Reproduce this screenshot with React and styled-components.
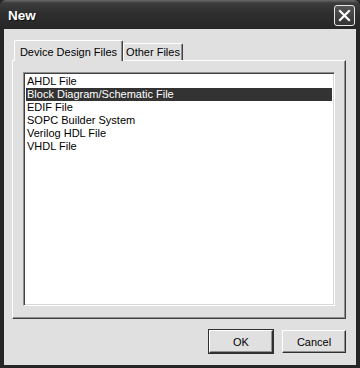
import styled, { createGlobalStyle } from "styled-components";

const Global = createGlobalStyle`
  body { margin: 0; background: #202020; }
`

const Window = styled.div`width: 360px; height: 368px; box-sizing: border-box; display: flex; flex-direction: column; background: #262626; padding: 0 4px 3px 4px; font-family: "Liberation Sans", Arial, sans-serif; font-size: 11px; color: #000;`
const TitleBar = styled.div`height: 29px; margin: 0 -4px; padding: 0 5px 0 8px; display: flex; align-items: center; justify-content: space-between; background: linear-gradient(#6a6a6a 0px, #3c3c3c 3px, #2e2e2e 14px, #262626 29px); border-radius: 6px 6px 0 0;`
const TitleText = styled.span`color: #fff; font-family: "Liberation Sans", Arial, sans-serif; font-weight: bold; font-size: 13.5px; text-shadow: 1px 1px 0 #111; margin-top: 1px;`
const CloseBtn = styled.div`width: 19px; height: 19px; border: 1px solid #e8e8e8; border-radius: 3px; display: flex; align-items: center; justify-content: center; background: linear-gradient(#555, #333); margin-top: 1px;`
const Body = styled.div`flex: 1; background: #e0e0e0; display: flex; flex-direction: column; padding: 11px 10px 12px 8px;`
const TabRow = styled.div`display: flex; align-items: flex-end; padding-left: 2px; height: 20px; position: relative; z-index: 1;`
const Tab = styled.div`box-sizing: border-box; display: flex; align-items: center; justify-content: center; background: #e0e0e0; border-top: 1px solid #fff; border-left: 1px solid #fff; border-right: 1px solid #404040; box-shadow: inset -1px 0 0 #909090; border-radius: 2px 2px 0 0; height: ${p => p.$active ? "21px" : "17px"}; width: ${p => p.$w}px; margin-bottom: ${p => p.$active ? "-1px" : "0"}; padding-top: ${p => p.$active ? "1px" : "0"}; font-size: 11px;`
const Panel = styled.div`height: 259px; box-sizing: border-box; border-top: 1px solid #fff; border-left: 1px solid #fff; border-right: 1px solid #404040; border-bottom: 1px solid #404040; box-shadow: inset -1px -1px 0 #909090; padding: 11px 10px 12px 10px; display: flex;`
const ListBox = styled.div`flex: 1; background: #fff; border-top: 1px solid #909090; border-left: 1px solid #909090; border-right: 1px solid #fff; border-bottom: 1px solid #fff; box-shadow: inset 1px 1px 0 #404040, inset -1px -1px 0 #d8d8d8; padding: 2px 2px;`
const Item = styled.div`height: 13px; line-height: 13px; padding-left: 1px; white-space: nowrap; background: ${p => p.$selected ? "#333333" : "transparent"}; color: ${p => p.$selected ? "#fff" : "#000"};`
const Footer = styled.div`display: flex; justify-content: flex-end; gap: 9px; margin-top: 11px;`
const Button = styled.div`width: 64px; height: 23px; box-sizing: border-box; display: flex; align-items: center; justify-content: center; background: #e0e0e0; border-top: 1px solid #fff; border-left: 1px solid #fff; border-right: 1px solid #303030; border-bottom: 1px solid #303030; box-shadow: inset -1px -1px 0 #909090; ${p => p.$default && "outline: 1px solid #303030;"} font-size: 11px;`

const files = ["AHDL File", "Block Diagram/Schematic File", "EDIF File", "SOPC Builder System", "Verilog HDL File", "VHDL File"]

export default function App() {
  return (
    <Window>
      <Global />
      <TitleBar>
        <TitleText>New</TitleText>
        <CloseBtn>
          <svg width="13" height="13" viewBox="0 0 13 13">
            <path d="M2 2 L11 11 M11 2 L2 11" stroke="#fff" strokeWidth="2.2" strokeLinecap="square" />
          </svg>
        </CloseBtn>
      </TitleBar>
      <Body>
        <TabRow>
          <Tab $active $w={109}>Device Design Files</Tab>
          <Tab $w={60}>Other Files</Tab>
        </TabRow>
        <Panel>
          <ListBox>
            {files.map((f, i) => (
              <Item key={f} $selected={i === 1}>{f}</Item>
            ))}
          </ListBox>
        </Panel>
        <Footer>
          <Button $default>OK</Button>
          <Button>Cancel</Button>
        </Footer>
      </Body>
    </Window>
  )
}
